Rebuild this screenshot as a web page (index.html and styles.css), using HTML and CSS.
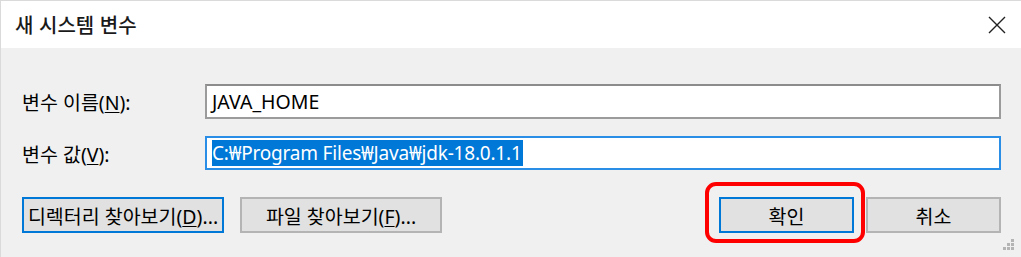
FILE: index.html
```html
<!DOCTYPE html>
<html lang="ko">
  <head>
    <meta charset="UTF-8" />
    <meta name="viewport" content="width=device-width, initial-scale=1.0" />
    <title>새 시스템 변수</title>
    <link rel="stylesheet" href="styles.css">
  </head>
  <body>
    <div class="dialog">
      <!-- 제목 표시줄 -->
      <div class="titlebar">
        <span class="title">새 시스템 변수</span>
        <svg class="close-icon" width="18" height="18" viewBox="0 0 18 18">
          <path d="M1 1 L17 17 M17 1 L1 17" stroke="#222" stroke-width="1.4" fill="none" />
        </svg>
      </div>

      <div class="content">
        <div class="field-row">
          <label class="field-label">변수 이름(<u>N</u>):</label>
          <div class="text-box">JAVA_HOME</div>
        </div>
        <div class="field-row">
          <label class="field-label">변수 값(<u>V</u>):</label>
          <div class="text-box focused"><span class="selected">C:₩Program Files₩Java₩jdk-18.0.1.1</span></div>
        </div>

        <div class="button-row">
          <div class="button-group">
            <button class="win-button default wide">디렉터리 찾아보기(<u>D</u>)...</button>
            <button class="win-button wide">파일 찾아보기(<u>F</u>)...</button>
          </div>
          <div class="button-group tight">
            <span class="highlight">
              <button class="win-button default small">확인</button>
            </span>
            <button class="win-button small">취소</button>
          </div>
        </div>
      </div>

      <svg class="grip" width="14" height="14" viewBox="0 0 14 14">
        <rect x="10" y="0" width="3" height="3" fill="#b4b4b4" />
        <rect x="6" y="4" width="3" height="3" fill="#b4b4b4" />
        <rect x="10" y="4" width="3" height="3" fill="#b4b4b4" />
        <rect x="2" y="8" width="3" height="3" fill="#b4b4b4" />
        <rect x="6" y="8" width="3" height="3" fill="#b4b4b4" />
        <rect x="10" y="8" width="3" height="3" fill="#b4b4b4" />
      </svg>
    </div>
  </body>
</html>
```

FILE: styles.css
```css
body {
  margin: 0;
  background-color: #f0f0f0;
  font-family: "Noto Sans", "Noto Sans CJK KR", sans-serif;
  color: #000;
}
.dialog {
  position: relative;
  width: 1021px;
  height: 257px;
  box-sizing: border-box;
  border-top: 1px solid #dadada;
  border-left: 1px solid #dadada;
  background-color: #f0f0f0;
  overflow: hidden;
}
.titlebar {
  height: 47px;
  background-color: #ffffff;
  display: flex;
  align-items: center;
  justify-content: space-between;
  padding: 0 15px 0 14px;
}
.title {
  font-family: "Noto Sans CJK KR", sans-serif;
  font-size: 20px;
  font-weight: 500;
  color: #1a1a1a;
}
.content {
  padding: 36px 20px 0 21px;
}
.field-row {
  display: flex;
  align-items: center;
  margin-bottom: 17px;
}
.field-label {
  width: 183px;
  font-size: 19.5px;
}
.field-label u,
.win-button u {
  text-decoration-thickness: 1px;
  text-underline-offset: 2px;
}
.text-box {
  flex: 1;
  height: 35px;
  box-sizing: border-box;
  background-color: #ffffff;
  border: 2px solid #9b9b9b;
  border-top-color: #8c8c8c;
  display: flex;
  align-items: center;
  padding-left: 5px;
  font-size: 19.5px;
}
.text-box.focused {
  height: 34px;
  border: 2px solid #2b8ee6;
}
.selected {
  background-color: #0078d7;
  color: #ffffff;
  font-size: 19px;
  line-height: 26px;
  letter-spacing: -0.2px;
  padding-right: 1px;
}
.button-row {
  display: flex;
  justify-content: space-between;
  margin-top: 27px;
}
.button-group {
  display: flex;
  gap: 16px;
}
.button-group.tight {
  gap: 12px;
}
.win-button {
  height: 36px;
  box-sizing: border-box;
  background-color: #e1e1e1;
  border: 2px solid #b4b4b4;
  font-family: "Noto Sans", "Noto Sans CJK KR", sans-serif;
  font-size: 19.5px;
  color: #000;
  padding: 0;
  white-space: nowrap;
}
.win-button.default {
  border-color: #0078d7;
}
.win-button.wide {
  width: 202px;
}
.win-button.small {
  width: 135px;
}
.highlight {
  position: relative;
  display: flex;
}
.highlight::after {
  content: "";
  position: absolute;
  top: -15px;
  left: -14px;
  right: -11px;
  bottom: -10px;
  border: 4px solid #ff0000;
  border-radius: 11px;
}
.grip {
  position: absolute;
  right: 6px;
  bottom: 4px;
}
```
